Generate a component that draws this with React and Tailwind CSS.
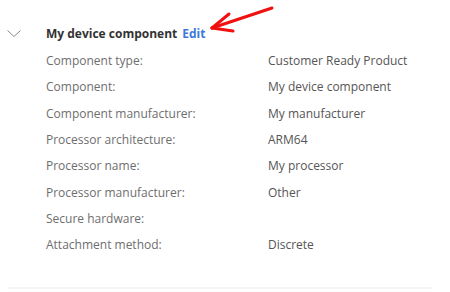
import React from 'react';

const rows = [
    ['Component type:', 'Customer Ready Product'],
    ['Component:', 'My device component'],
    ['Component manufacturer:', 'My manufacturer'],
    ['Processor architecture:', 'ARM64'],
    ['Processor name:', 'My processor'],
    ['Processor manufacturer:', 'Other'],
    ['Secure hardware:', ''],
    ['Attachment method:', 'Discrete'],
];

export default function App() {
    return (
        <div className="w-[450px] h-[292px] bg-white overflow-hidden font-['Open_Sans',sans-serif] relative">
            <div className="pt-[24px] pl-[7px]">
                <div className="flex items-center h-[20px]">
                    <svg width="14" height="8" viewBox="0 0 14 8" className="mr-[25px]">
                        <path d="M0.5 0.5 L7 6.5 L13.5 0.5" fill="none" stroke="#8a8a8a" strokeWidth="1" />
                    </svg>
                    <span className="text-[12px] font-bold text-[#323232]">My device component</span>
                    <span className="text-[12px] font-bold text-[#3b7ad9] ml-[5px]">Edit</span>
                </div>

                <div className="pl-[39px] pt-[4px] text-[12px]">
                    {rows.map(([label, value]) => (
                        <div key={label} className="flex items-center h-[26.3px]">
                            <span className="w-[222px] text-[#6e6e6e]">{label}</span>
                            <span className="text-[#555555]">{value}</span>
                        </div>
                    ))}
                </div>
            </div>

            <div className="mt-[29px] ml-[8px] w-[424px] h-[2px] bg-[#f4f4f4]" />

            {/* annotation arrow */}
            <svg className="absolute left-0 top-0" width="450" height="60" viewBox="0 0 450 60">
                <g stroke="#f01010" strokeWidth="3" strokeLinecap="round" strokeLinejoin="round" fill="none">
                    <path d="M212 28 L272 8" />
                    <path d="M212 28 L229 14" />
                    <path d="M212 28 L233 31" />
                </g>
            </svg>
        </div>
    );
}
